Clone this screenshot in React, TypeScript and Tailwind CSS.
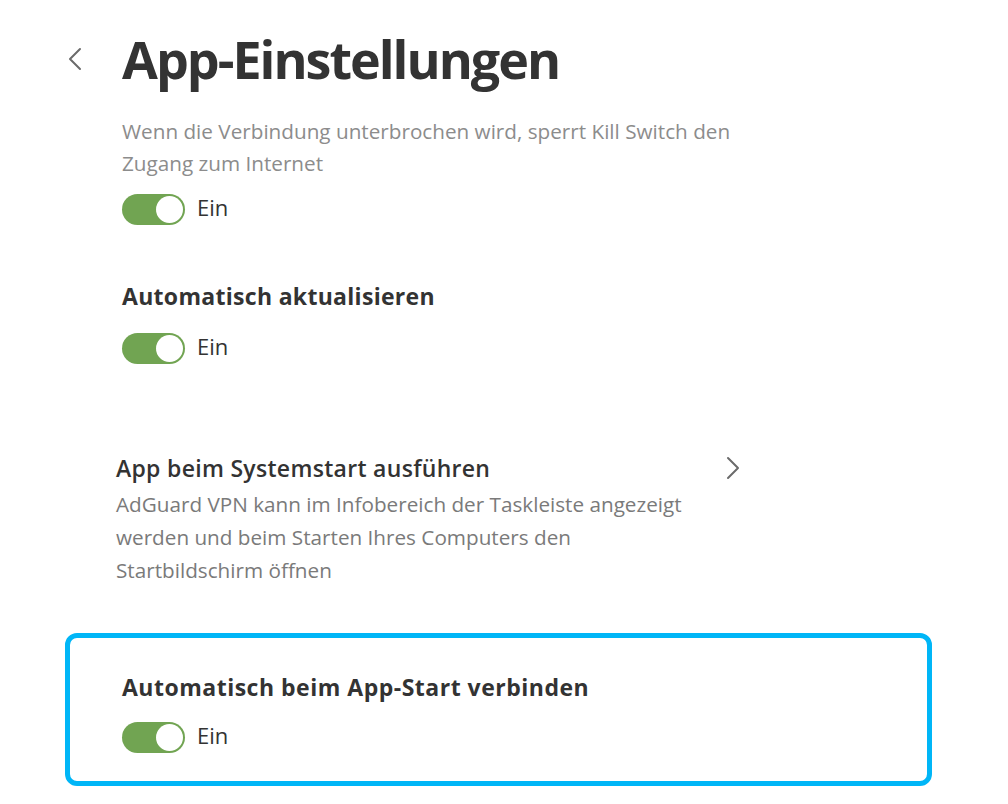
import React from "react";

function Toggle() {
  return (
    <div className="flex items-start gap-[12px]">
      <div className="flex h-[31px] w-[63px] items-center justify-end rounded-full bg-[#71a452] p-[2px]">
        <div className="h-[27px] w-[27px] rounded-full bg-white" />
      </div>
      <span className="text-[22px] leading-[27px] text-[#333333]">Ein</span>
    </div>
  );
}

export default function App() {
  return (
    <div className="relative h-[804px] w-[1008px] overflow-hidden bg-white font-['Open_Sans',sans-serif] text-[#333333]">
      <div className="flex items-center pt-[29px]">
        <div className="ml-[68px] flex h-[60px] w-[16px] items-center">
          <svg width="14" height="24" viewBox="0 0 14 24" fill="none">
            <polyline points="12,2 2,12 12,22" stroke="#6b6b6b" strokeWidth="2" strokeLinecap="round" strokeLinejoin="round" />
          </svg>
        </div>
        <h1 className="ml-[38px] text-[52px] font-bold leading-[60px] tracking-[-2px] text-[#333333]">App-Einstellungen</h1>
      </div>

      <div className="pl-[122px]">
        <p className="mt-[26px] w-[660px] text-[20.7px] leading-[32px] text-[#8c8c8c]">
          Wenn die Verbindung unterbrochen wird, sperrt Kill Switch den Zugang zum Internet
        </p>
        <div className="mt-[15px]">
          <Toggle />
        </div>

        <h2 className="mt-[56px] text-[23px] font-bold leading-[30px] tracking-[0.3px]">Automatisch aktualisieren</h2>
        <div className="mt-[22px]">
          <Toggle />
        </div>
      </div>

      <div className="ml-[116px] mt-[89px] w-[624px]">
        <div className="flex items-center justify-between">
          <h2 className="text-[23px] font-semibold leading-[30px] tracking-[0.3px]">App beim Systemstart ausführen</h2>
          <svg width="14" height="24" viewBox="0 0 14 24" fill="none">
            <polyline points="2,2 12,12 2,22" stroke="#6b6b6b" strokeWidth="2" strokeLinecap="round" strokeLinejoin="round" />
          </svg>
        </div>
        <p className="mt-[5px] w-[600px] text-[20.7px] leading-[33px] text-[#7a7a7a]">
          AdGuard VPN kann im Infobereich der Taskleiste angezeigt werden und beim Starten Ihres Computers den Startbildschirm öffnen
        </p>
      </div>

      <div className="ml-[65px] mt-[46px] w-[867px] rounded-[12px] border-[5px] border-[#00b6f7] pb-[28px] pl-[52px] pt-[34px]">
        <h2 className="text-[23px] font-bold leading-[30px] tracking-[0.5px]">Automatisch beim App-Start verbinden</h2>
        <div className="mt-[20px]">
          <Toggle />
        </div>
      </div>
    </div>
  );
}
